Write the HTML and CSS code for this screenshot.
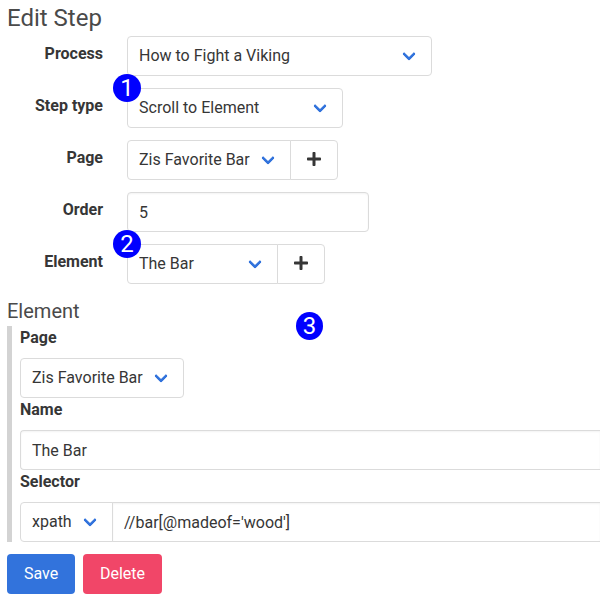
FILE: index.html
```html
<!DOCTYPE html>
<html lang="en">
<head>
<meta charset="utf-8">
<title>Edit Step</title>
<link rel="stylesheet" href="styles.css">
</head>
<body>
<svg class="defs" width="0" height="0"><symbol id="plus" viewBox="0 0 448 512"><path d="M416 208H272V64c0-17.67-14.33-32-32-32h-32c-17.67 0-32 14.33-32 32v144H32c-17.67 0-32 14.33-32 32v32c0 17.67 14.33 32 32 32h144v144c0 17.67 14.33 32 32 32h32c17.67 0 32-14.33 32-32V304h144c17.67 0 32-14.33 32-32v-32c0-17.67-14.33-32-32-32z"/></symbol></svg>
<main class="page">
  <h1 class="title">Edit Step</h1>
  <div class="field">
    <label class="field-label">Process</label>
    <div class="select process"><select><option>How to Fight a Viking</option></select></div>
  </div>
  <div class="field">
    <label class="field-label">Step type</label>
    <div class="select step-type"><span class="marker corner">1</span><select><option>Scroll to Element</option></select></div>
  </div>
  <div class="field">
    <label class="field-label">Page</label>
    <div class="addons">
      <div class="select page-name"><select><option>Zis Favorite Bar</option></select></div>
      <button class="button add"><svg class="icon"><use href="#plus"/></svg></button>
    </div>
  </div>
  <div class="field">
    <label class="field-label">Order</label>
    <input class="input order" type="text" value="5">
  </div>
  <div class="field">
    <label class="field-label">Element</label>
    <div class="addons">
      <div class="select element-name"><span class="marker corner">2</span><select><option>The Bar</option></select></div>
      <button class="button add"><svg class="icon"><use href="#plus"/></svg></button>
    </div>
  </div>
  <h2 class="subtitle">Element</h2>
  <section class="nested">
    <span class="marker panel">3</span>
    <label class="label">Page</label>
    <div class="select page-name"><select><option>Zis Favorite Bar</option></select></div>
    <label class="label">Name</label>
    <input class="input wide" type="text" value="The Bar">
    <label class="label">Selector</label>
    <div class="addons">
      <div class="select selector-type"><select><option>xpath</option></select></div>
      <input class="input wide" type="text" value="//bar[@madeof='wood']">
    </div>
  </section>
  <div class="buttons">
    <button class="button save">Save</button>
    <button class="button delete">Delete</button>
  </div>
</main>
</body>
</html>
```
FILE: styles.css
```css
*, *::before, *::after { box-sizing: border-box; }
html { overflow: hidden; background: #fff; }
body { margin: 0; font: 400 16px/1.5 Roboto, sans-serif; color: #4a4a4a; }
.defs { position: absolute; }
.page { padding: 5px 0 0 7px; }
.title { margin: 0 0 4px; font-size: 24px; font-weight: 400; line-height: 27px; }
.subtitle { margin: 0; padding-top: 1px; font-size: 20px; font-weight: 400; line-height: 28px; height: 30px; }
.field { display: flex; margin-bottom: 12px; }
.field-label { width: 96px; margin-right: 24px; padding-top: 6px; text-align: right; font-weight: 700; color: #363636; }
.label { display: block; margin-bottom: 8px; font-weight: 700; color: #363636; }
.select { position: relative; height: 40px; flex: none; }
.select::after {
  content: ""; position: absolute; top: 50%; right: 18px;
  width: 10px; height: 10px; margin-top: -7px;
  border: 3px solid #3273dc; border-top: 0; border-right: 0; border-radius: 2px;
  transform: rotate(-45deg); pointer-events: none;
}
select, .input, .button {
  display: block; height: 40px; margin: 0; border: 1px solid #dbdbdb; border-radius: 4px;
  font: inherit; color: #363636; background: #fff; appearance: none; outline: none;
}
select { width: 100%; padding: 7px 40px 7px 11px; }
.input { width: 100%; padding: 7px 11px; box-shadow: inset 0 1px 2px rgba(10, 10, 10, .05); }
.process { width: 305px; }
.step-type { width: 216px; }
.page-name { width: 164px; }
.element-name { width: 151px; }
.selector-type { width: 93px; }
.order { width: 242px; }
.addons { display: flex; }
.addons select { border-radius: 4px 0 0 4px; }
.addons > :last-child { margin-left: -1px; border-radius: 0 4px 4px 0; }
.wide { border-right: 0; border-radius: 4px 0 0 4px; }
.addons > .wide:last-child { flex: 1; min-width: 0; border-radius: 0; }
.add { width: 48px; display: flex; align-items: center; justify-content: center; padding: 0 0 2px; }
.icon { width: 14px; height: 16px; fill: #363636; }
.nested { position: relative; padding-left: 8px; border-left: 5px solid #d3d3d3; }
.marker {
  position: absolute; z-index: 1; width: 28px; height: 28px; border-radius: 50%;
  background: #00f; color: #fff; font-size: 24px; line-height: 28px; text-align: center;
}
.corner { top: -14px; left: -14px; }
.panel { top: -14px; left: 284px; width: 27px; }
.buttons { display: flex; gap: 8px; margin-top: 12px; }
.save, .delete { border-color: transparent; padding: 0; color: #fff; }
.save { width: 68px; background: #3273dc; }
.delete { width: 79px; background: #f14668; }
```
